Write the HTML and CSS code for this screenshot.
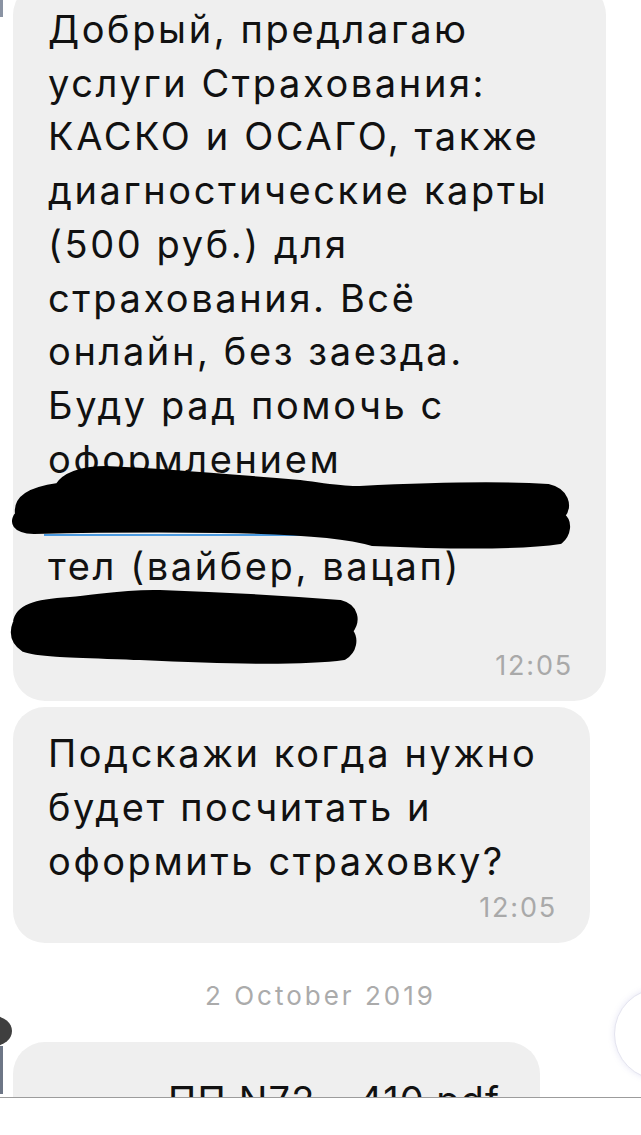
FILE: index.html
```html
<!DOCTYPE html>
<html lang="ru">
<head>
    <meta charset="UTF-8">
    <meta name="viewport" content="width=device-width, initial-scale=1.0">
    <title>Chat</title>
    <link rel="stylesheet" href="styles.css">
</head>
<body>
    <div class="chat">
        <!-- edge of the previous row and the avatar, cut by the screen -->
        <span class="edge-mark"></span>
        <span class="avatar"></span>
        <span class="avatar-tail"></span>
        <span class="scroll-down"></span>

        <div class="thread">
            <div class="bubble bubble-long">
                <p class="text">
                    Добрый, предлагаю<br>
                    услуги Страхования:<br>
                    КАСКО и ОСАГО, также<br>
                    диагностические карты<br>
                    (500 руб.) для<br>
                    страхования. Всё<br>
                    онлайн, без заезда.<br>
                    Буду рад помочь с<br>
                    оформлением
                </p>
                <div class="redacted">
                    <span class="link-line"></span>
                    <svg class="scribble scribble-link" viewBox="8 460 566 92" width="566" height="92">
                        <path d="M18 514 C16 498 30 490 58 486 C64 476 80 469 106 469 C150 471 230 477 300 483 C330 487 346 490 360 489 C420 486 500 484 548 487 C566 491 570 506 562 516 C570 522 568 534 560 541 C520 547 440 546 372 543 C350 536 300 531 220 530 C150 529 80 530 34 531 C14 530 12 522 18 514 Z"/>
                    </svg>
                </div>
                <p class="text">тел (вайбер, вацап)</p>
                <div class="redacted">
                    <svg class="scribble scribble-phone" viewBox="8 584 352 84" width="352" height="84">
                        <path d="M16 622 C18 608 34 602 70 600 C100 598 120 592 160 593 C220 595 290 599 340 603 C356 607 358 621 350 631 C356 639 354 651 344 657 C300 663 220 661 140 657 C90 655 40 655 24 649 C12 641 12 632 16 622 Z"/>
                    </svg>
                </div>
                <div class="time">12:05</div>
            </div>

            <div class="bubble bubble-short">
                <p class="text">
                    Подскажи когда нужно<br>
                    будет посчитать и<br>
                    оформить страховку?
                </p>
                <div class="time">12:05</div>
            </div>

            <div class="date">2 October 2019</div>

            <div class="bubble bubble-file">
                <p class="text file-name">ПП N72 - 410.pdf</p>
            </div>
        </div>
    </div>
    <div class="composer"></div>
</body>
</html>
```

FILE: styles.css
```css
body {
    margin: 0;
    background-color: #ffffff;
    font-family: Inter, "Liberation Sans", Arial, sans-serif;
    color: #111111;
}

/* Chat area */
.chat {
    position: relative;
    height: 1097px;
    overflow: hidden;
    border-bottom: 1px solid #9c9c9c;
}
.thread {
    display: flex;
    flex-direction: column;
    align-items: flex-start;
    gap: 6px;
    margin-top: -17px;
    padding-left: 13px;
}

/* Bubbles */
.bubble {
    box-sizing: border-box;
    background-color: #efefef;
    border-radius: 32px;
    padding: 20px 33px 20px 35px;
}
.bubble-long {
    width: 593px;
}
.bubble-short {
    width: 577px;
}
.bubble-file {
    width: 527px;
    height: 120px;
    padding-top: 32px;
    padding-left: 155px;
}
.text {
    margin: 0;
    font-size: 38px;
    line-height: 53.7px;
    letter-spacing: 2.6px;
    white-space: nowrap;
}
.file-name {
    letter-spacing: 1.2px;
}
.time {
    margin-top: 4px;
    font-size: 27px;
    line-height: 30px;
    letter-spacing: 1.8px;
    text-align: right;
    color: #a9a9a9;
}

/* Hidden link and phone, scribbled over */
.redacted {
    position: relative;
    height: 53.7px;
}
.link-line {
    display: block;
    width: 310px;
    height: 48px;
    margin-left: -4px;
    border-bottom: 2px solid #4b9ae0;
}
.scribble {
    position: absolute;
    fill: #000000;
    stroke: #000000;
    stroke-width: 6;
    stroke-linejoin: round;
}
.scribble-link {
    left: -40px;
    top: -26px;
}
.scribble-phone {
    left: -40px;
    top: -10px;
}

/* Date separator */
.date {
    align-self: center;
    margin: 32px 0 25px -13px;
    font-size: 26px;
    line-height: 30px;
    letter-spacing: 3px;
    color: #ababab;
}

/* Bits cut by the screen edges */
.edge-mark {
    position: absolute;
    left: 0;
    top: 0;
    width: 3px;
    height: 17px;
    background-color: #8a93a3;
}
.avatar {
    position: absolute;
    left: -24px;
    top: 1016px;
    width: 36px;
    height: 30px;
    border-radius: 50%;
    background-color: #3f3f3f;
}
.avatar-tail {
    position: absolute;
    left: 0;
    top: 1046px;
    width: 3px;
    height: 48px;
    background-color: #6d7686;
}
.scroll-down {
    position: absolute;
    left: 614px;
    top: 988px;
    width: 90px;
    height: 90px;
    border-radius: 50%;
    background-color: #ffffff;
    border: 1px solid #e4e4ef;
    box-shadow: 0 0 6px rgba(120, 120, 200, 0.18);
}

.composer {
    height: 37px;
    background-color: #ffffff;
}
```
